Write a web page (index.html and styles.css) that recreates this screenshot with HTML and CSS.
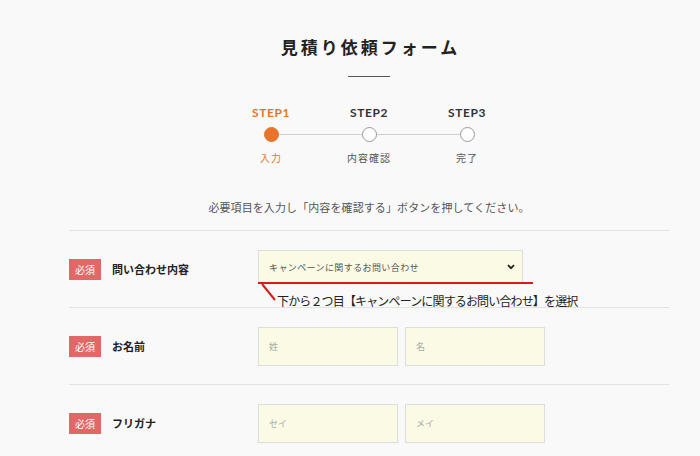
FILE: index.html
```html
<!DOCTYPE html>
<html lang="ja">

<head>
  <meta charset="UTF-8">
  <title>見積り依頼フォーム</title>
  <link rel="stylesheet" href="styles.css">
</head>

<body>
  <div class="container">
    <div class="header">
      <h1>見積り依頼フォーム</h1>
      <div class="header-line"></div>
    </div>

    <div class="steps">
      <div class="step active">
        <div class="step-title">STEP1</div>
        <div class="step-dot"></div>
        <div class="step-name">入力</div>
      </div>
      <div class="step">
        <div class="step-title">STEP2</div>
        <div class="step-dot"></div>
        <div class="step-name">内容確認</div>
      </div>
      <div class="step">
        <div class="step-title">STEP3</div>
        <div class="step-dot"></div>
        <div class="step-name">完了</div>
      </div>
    </div>

    <p class="lead">必要項目を入力し「内容を確認する」ボタンを押してください。</p>

    <form class="form">
      <div class="form-row first">
        <div class="form-label">
          <span class="required">必須</span>
          <label>問い合わせ内容</label>
        </div>
        <div class="form-field select-field">
          <select class="select">
            <option>キャンペーンに関するお問い合わせ</option>
          </select>
          <svg class="chevron" width="8" height="6" viewBox="0 0 8 6">
            <path d="M1 1.2 L4 4.2 L7 1.2" fill="none" stroke="#222" stroke-width="1.8" />
          </svg>
          <!-- 注釈 -->
          <svg class="note-mark" width="280" height="22" viewBox="0 0 280 22">
            <line x1="0" y1="1" x2="275" y2="1" stroke="#d41c1c" stroke-width="2" />
            <line x1="4" y1="2" x2="17" y2="18" stroke="#d41c1c" stroke-width="2" />
          </svg>
          <span class="note-text">下から２つ目【キャンペーンに関するお問い合わせ】を選択</span>
        </div>
      </div>

      <div class="form-row">
        <div class="form-label">
          <span class="required">必須</span>
          <label>お名前</label>
        </div>
        <div class="form-field pair">
          <input type="text" placeholder="姓">
          <input type="text" placeholder="名">
        </div>
      </div>

      <div class="form-row">
        <div class="form-label">
          <span class="required">必須</span>
          <label>フリガナ</label>
        </div>
        <div class="form-field pair">
          <input type="text" placeholder="セイ">
          <input type="text" placeholder="メイ">
        </div>
      </div>
    </form>
  </div>
</body>

</html>
```

FILE: styles.css
```css
* {
  margin: 0;
  padding: 0;
  box-sizing: border-box;
}

body {
  font-family: 'Noto Sans CJK JP', 'Noto Sans', sans-serif;
  background: #f9f9f9;
  color: #333;
  overflow: hidden;
}

.container {
  width: 600px;
  margin-left: 69px;
}

.header {
  text-align: center;
  padding-top: 34px;
}

.header h1 {
  font-size: 17px;
  font-weight: 700;
  letter-spacing: 3px;
  line-height: 26px;
  color: #222;
  padding-left: 3px;
}

.header-line {
  width: 42px;
  height: 1px;
  background: #555;
  margin: 16px auto 0;
}

.steps {
  display: flex;
  justify-content: center;
  margin-top: 28px;
  position: relative;
}

.step {
  width: 98px;
  display: flex;
  flex-direction: column;
  align-items: center;
  position: relative;
}

.step-title {
  font-family: Lato, 'Noto Sans', sans-serif;
  font-size: 12px;
  font-weight: 700;
  letter-spacing: 0.6px;
  line-height: 16px;
  color: #333;
}

.step-dot {
  width: 15px;
  height: 15px;
  border-radius: 50%;
  border: 1px solid #9a9a9a;
  background: #fff;
  margin-top: 6px;
  position: relative;
  z-index: 1;
}

/* ステップ間の線 */
.step:not(:last-child)::after {
  content: '';
  position: absolute;
  top: 29px;
  left: 50%;
  width: 98px;
  height: 1px;
  background: #cfcfcf;
}

.step-name {
  font-size: 10px;
  letter-spacing: 1px;
  line-height: 14px;
  color: #555;
  margin-top: 9px;
}

.step.active .step-title,
.step.active .step-name {
  color: #e8742b;
}

.step.active .step-dot {
  background: #e8742b;
  border-color: #e8742b;
}

.lead {
  text-align: center;
  font-size: 11px;
  letter-spacing: 0.1px;
  line-height: 16px;
  color: #555;
  margin-top: 34px;
  padding-bottom: 15px;
}

.form-row {
  display: flex;
  align-items: center;
  height: 77px;
  border-top: 1px solid #e3e3e3;
}

.form-label {
  width: 189px;
  display: flex;
  align-items: center;
}

.required {
  display: inline-block;
  width: 32px;
  height: 21px;
  line-height: 21px;
  text-align: center;
  background: #e26868;
  color: #fff;
  font-size: 10px;
  margin-right: 11px;
}

.form-label label {
  font-size: 11px;
  font-weight: 700;
  color: #222;
}

.form-field {
  display: flex;
  gap: 7px;
}

.select-field {
  position: relative;
  margin-bottom: 4px;
}

.select {
  appearance: none;
  width: 265px;
  height: 34px;
  padding: 0 10px;
  background: #fbfbe5;
  border: 1px solid #ddd;
  font-family: inherit;
  font-size: 9px;
  letter-spacing: 0.4px;
  color: #555;
}

.chevron {
  position: absolute;
  right: 8px;
  top: 14px;
}

.note-mark {
  position: absolute;
  left: 0;
  top: 32px;
}

.note-text {
  position: absolute;
  left: 19px;
  top: 43px;
  white-space: nowrap;
  font-size: 12px;
  line-height: 16px;
  letter-spacing: -0.85px;
  color: #222;
}

.pair input {
  width: 140px;
  height: 39px;
  padding: 0 10px;
  background: #fbfbe5;
  border: 1px solid #ddd;
  font-family: inherit;
  font-size: 9px;
  color: #333;
}

.pair input::placeholder {
  color: #aaa;
}
```
